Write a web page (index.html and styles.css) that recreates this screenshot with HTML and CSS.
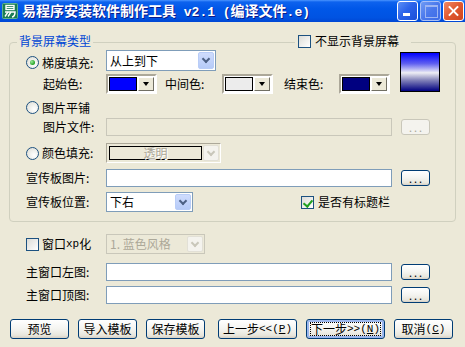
FILE: index.html
```html
<!DOCTYPE html>
<html lang="zh-CN">

<head>
    <meta charset="UTF-8">
    <title>易程序安装软件制作工具</title>
    <link rel="stylesheet" href="styles.css">
</head>

<body>
    <div class="window">
        <div class="titlebar">
            <svg class="app-icon" viewBox="0 0 16 16">
                <rect x="0.5" y="0.5" width="15" height="15" rx="1" fill="#1b7d55" stroke="#5fb38c"/>
                <rect x="4" y="2.5" width="8" height="4" fill="none" stroke="#fff" stroke-width="1.4"/>
                <line x1="4" y1="4.5" x2="12" y2="4.5" stroke="#fff" stroke-width="1"/>
                <path d="M3 9 H13 Q13 13.5 10 14" fill="none" stroke="#fff" stroke-width="1.5"/>
                <path d="M6 9 L3 13.5 M9 9 L6 13.5" fill="none" stroke="#fff" stroke-width="1.4"/>
            </svg>
            <span class="title">易程序安装软件制作工具<span class="mono"> v2.1 (</span>编译文件<span class="mono">.e)</span></span>
            <div class="caption">
                <span class="cbtn min"></span>
                <span class="cbtn max"></span>
                <span class="cbtn close"></span>
            </div>
        </div>

        <div class="client">
            <div class="group">
                <div class="group-head">
                    <span class="legend">背景屏幕类型</span>
                    <span class="head-check"><span class="check"></span>不显示背景屏幕</span>
                </div>

                <div class="grad-area">
                    <div class="grad-rows">
                        <div class="row r1">
                            <span class="lbl opt"><span class="radio on"></span>梯度填充:</span>
                            <div class="select sel-dir">从上到下<span class="drop"></span></div>
                        </div>
                        <div class="row r2">
                            <span class="lbl sub">起始色:</span>
                            <div class="picker"><span class="swatch sw-blue"></span><span class="pick-btn"></span></div>
                            <span class="lbl2 mid">中间色:</span>
                            <div class="picker"><span class="swatch sw-light"></span><span class="pick-btn"></span></div>
                            <span class="lbl2 end">结束色:</span>
                            <div class="picker"><span class="swatch sw-navy"></span><span class="pick-btn"></span></div>
                        </div>
                    </div>
                    <div class="preview"></div>
                </div>

                <div class="row r3">
                    <span class="lbl"><span class="radio"></span>图片平铺</span>
                </div>
                <div class="row r4">
                    <span class="lbl sub">图片文件:</span>
                    <div class="input disabled"></div>
                    <span class="btn dots disabled">...</span>
                </div>
                <div class="row r5">
                    <span class="lbl"><span class="radio"></span>颜色填充:</span>
                    <div class="color-combo">
                        <span class="cc-face">透明</span>
                        <span class="drop off"></span>
                    </div>
                </div>
                <div class="row r6">
                    <span class="lbl">宣传板图片:</span>
                    <div class="input"></div>
                    <span class="btn dots">...</span>
                </div>
                <div class="row r7">
                    <span class="lbl">宣传板位置:</span>
                    <div class="select sel-pos">下右<span class="drop"></span></div>
                    <span class="opt-check"><span class="check on"></span>是否有标题栏</span>
                </div>
            </div>

            <div class="row x1">
                <span class="lbl"><span class="check"></span>窗口<span class="mono-s">xp</span>化</span>
                <div class="select sel-style off">1. 蓝色风格<span class="drop off"></span></div>
            </div>
            <div class="row x2">
                <span class="lbl">主窗口左图:</span>
                <div class="input"></div>
                <span class="btn dots">...</span>
            </div>
            <div class="row x3">
                <span class="lbl">主窗口顶图:</span>
                <div class="input"></div>
                <span class="btn dots">...</span>
            </div>

            <div class="btnrow">
                <span class="btn small">预览</span>
                <span class="btn small">导入模板</span>
                <span class="btn small">保存模板</span>
                <span class="btn wide prev">上一步<span class="mono-s">&lt;&lt;(<u>P</u>)</span></span>
                <span class="btn wide focus"><span class="focus-ring">下一步<span class="mono-s">&gt;&gt;(<u>N</u>)</span></span></span>
                <span class="btn small">取消<span class="mono-s">(<u>C</u>)</span></span>
            </div>
        </div>
    </div>
</body>

</html>
```

FILE: styles.css
```css
* {
    box-sizing: border-box;
}

body {
    margin: 0;
    font-family: "Noto Sans CJK SC", "Liberation Sans", sans-serif;
    font-size: 12px;
    line-height: 14px;
    color: #000;
    background: #ECE9D8;
}

.window {
    width: 465px;
    height: 347px;
    background: #ECE9D8;
    overflow: hidden;
}

/* title bar */
.titlebar {
    height: 22px;
    display: flex;
    align-items: center;
    padding-left: 2px;
    background: linear-gradient(#4a94ff 0, #0d62ee 2px, #0057e8 40%, #0053e2 80%, #0047d4 100%);
}

.app-icon {
    width: 16px;
    height: 16px;
    flex: none;
}

.title {
    margin-left: 4px;
    color: #fff;
    font-weight: bold;
    font-size: 14px;
    line-height: 16px;
    white-space: nowrap;
    text-shadow: 1px 1px 0 #0a1a8a;
}

.mono {
    font-family: "Liberation Mono", monospace;
    font-size: 13px;
}

.mono-s {
    font-family: "Liberation Mono", monospace;
    font-size: 11px;
}

.caption {
    display: flex;
    gap: 2px;
    margin-left: auto;
    margin-right: 1px;
    align-self: flex-start;
    margin-top: 1px;
}

.cbtn {
    position: relative;
    width: 21px;
    height: 20px;
    border: 1px solid #fff;
    border-radius: 3px;
    background: linear-gradient(135deg, #5a8ef6, #2b63ea 45%, #1a4fd8);
}

.cbtn.min::after {
    content: "";
    position: absolute;
    left: 5px;
    bottom: 4px;
    width: 7px;
    height: 3px;
    background: #fff;
}

.cbtn.max {
    border-color: #aac0f6;
    background: linear-gradient(135deg, #6f9bf4, #4a78ec 50%, #3d6be6);
}

.cbtn.max::after {
    content: "";
    position: absolute;
    left: 4px;
    top: 3px;
    width: 11px;
    height: 10px;
    border: 1px solid #9db5f3;
    border-top-width: 2px;
}

.cbtn.close {
    background: linear-gradient(135deg, #f08a66, #e0582f 50%, #cf4320);
}

.cbtn.close::before,
.cbtn.close::after {
    content: "";
    position: absolute;
    left: 3px;
    top: 8px;
    width: 13px;
    height: 2px;
    background: #fff;
    transform: rotate(45deg);
}

.cbtn.close::after {
    transform: rotate(-45deg);
}

/* client area */
.client {
    padding: 20px 0 0 9px;
}

.group {
    width: 447px;
    border: 1px solid #D0D0BF;
    border-radius: 4px;
    padding: 0 0 9px 16px;
}

.group-head {
    display: flex;
    align-items: center;
    height: 14px;
    margin: -9px 0 0 -16px;
}

.legend {
    margin-left: 7px;
    padding: 0 2px;
    color: #0046D5;
    background: #ECE9D8;
}

.head-check {
    display: flex;
    align-items: center;
    margin-left: auto;
    margin-right: 44px;
    padding: 0 12px 0 3px;
    background: #ECE9D8;
}

.row {
    display: flex;
    align-items: center;
}

.lbl {
    width: 80px;
    flex: none;
    display: flex;
    align-items: center;
    white-space: nowrap;
}

.lbl.sub {
    padding-left: 17px;
}

.lbl.opt {
    margin-top: 4px;
}

.lbl2 {
    flex: none;
    white-space: nowrap;
}

.lbl2.mid {
    margin-left: 8px;
    width: 57px;
}

.lbl2.end {
    margin-left: 11px;
    width: 55px;
}

.grad-area {
    display: flex;
    align-items: flex-start;
}

.r1 {
    margin-top: 2px;
    height: 21px;
}

.r2 {
    margin-top: 3px;
    height: 20px;
}

.r3 {
    margin-top: 6px;
    height: 15px;
}

.r4 {
    margin-top: 3px;
    height: 18px;
}

.r5 {
    margin-top: 7px;
    height: 20px;
}

.r6 {
    margin-top: 6px;
    height: 18px;
}

.r7 {
    margin-top: 5px;
    height: 20px;
}

.x1 {
    margin: 12px 0 0 17px;
    height: 20px;
}

.x2 {
    margin: 9px 0 0 17px;
    height: 18px;
}

.x3 {
    margin: 5px 0 0 17px;
    height: 18px;
}

.preview {
    width: 40px;
    height: 40px;
    margin: 4px 0 0 10px;
    border: 1px solid #000;
    background: linear-gradient(#0000ff, #6060f0 28%, #eeeef4 52%, #8080b8 72%, #000080);
}

/* radio and check boxes */
.radio,
.check {
    position: relative;
    width: 13px;
    height: 13px;
    flex: none;
    margin-right: 3px;
    border: 1px solid #1C5180;
    background: linear-gradient(135deg, #dcdcd7, #fff);
}

.radio {
    border-radius: 50%;
    background: radial-gradient(circle at 65% 65%, #fff, #e6e6e0 70%, #d0d0ca);
}

.radio.on::after {
    content: "";
    position: absolute;
    left: 3px;
    top: 3px;
    width: 5px;
    height: 5px;
    border-radius: 50%;
    background: radial-gradient(circle at 35% 35%, #9ce89a, #21a121 70%);
}

.check.on::after {
    content: "";
    position: absolute;
    left: 3px;
    top: 1px;
    width: 4px;
    height: 7px;
    border-right: 2px solid #21A121;
    border-bottom: 2px solid #21A121;
    transform: rotate(40deg);
}

.opt-check {
    display: flex;
    align-items: center;
    margin-left: 108px;
}

.opt-check .check,
.head-check .check {
    margin-right: 4px;
}

/* combo boxes */
.select {
    display: flex;
    align-items: center;
    height: 100%;
    padding-left: 3px;
    border: 1px solid #7F9DB9;
    background: #fff;
    white-space: nowrap;
}

.sel-dir {
    width: 110px;
}

.sel-pos {
    width: 87px;
}

.sel-style {
    width: 99px;
}

.select.off {
    border-color: #C9C7BA;
    background: #ECE9D8;
    color: #ACA899;
}

.drop {
    position: relative;
    flex: none;
    align-self: stretch;
    width: 16px;
    margin: 1px 1px 1px auto;
    border-radius: 2px;
    border: 1px solid #b9cdf7;
    background: linear-gradient(#cfdcfd, #b6cbf8);
}

.drop::after {
    content: "";
    position: absolute;
    left: 4px;
    top: 3px;
    width: 4px;
    height: 4px;
    border-right: 2px solid #4d6185;
    border-bottom: 2px solid #4d6185;
    transform: rotate(45deg);
}

.drop.off {
    border-color: #e2e0d6;
    background: #f4f3ee;
}

.drop.off::after {
    border-color: #c9c7ba;
}

.color-combo {
    display: flex;
    width: 115px;
    height: 100%;
    border: 1px solid;
    border-color: #ACA899 #fff #fff #ACA899;
    background: #ECE9D8;
}

.cc-face {
    display: flex;
    align-items: center;
    justify-content: center;
    width: 93px;
    margin: 2px 0 2px 2px;
    border: 1px solid #000;
    color: #ACA899;
    text-shadow: 1px 1px 0 #fff;
}

/* colour pickers */
.picker {
    display: flex;
    align-items: center;
    flex: none;
    width: 51px;
    height: 100%;
    padding: 1px;
    border: 2px solid;
    border-color: #ACA899 #fff #fff #ACA899;
    background: #fff;
}

.swatch {
    width: 28px;
    height: 14px;
    border: 1px solid #000;
}

.sw-blue {
    background: #0000ff;
}

.sw-light {
    background: #ececec;
}

.sw-navy {
    background: #000080;
}

.pick-btn {
    position: relative;
    width: 16px;
    height: 14px;
    margin-left: 1px;
    border: 1px solid;
    border-color: #fff #716f64 #716f64 #fff;
    background: #ECE9D8;
}

.pick-btn::after {
    content: "";
    position: absolute;
    left: 4px;
    top: 4px;
    border: 3px solid transparent;
    border-top: 4px solid #000;
    border-bottom: 0;
}

/* edit boxes */
.input {
    width: 286px;
    height: 100%;
    border: 1px solid #7F9DB9;
    background: #fff;
}

.input.disabled {
    border-color: #C9C7BA;
    background: #ECE9D8;
}

/* buttons */
.btn {
    display: flex;
    align-items: center;
    justify-content: center;
    flex: none;
    height: 20px;
    border: 1px solid #003C74;
    border-radius: 3px;
    background: linear-gradient(#ffffff, #f4f4f0 50%, #e8e6dc 85%, #d6d0c5);
    white-space: nowrap;
}

.btn.dots {
    width: 29px;
    height: 16px;
    margin-left: 9px;
    letter-spacing: 2px;
    padding-left: 2px;
    font-size: 11px;
    line-height: 10px;
}

.btn.disabled {
    border-color: #C9C7BA;
    background: #f4f3ee;
    color: #ACA899;
}

.btnrow {
    display: flex;
    gap: 9px;
    margin: 15px 0 0 1px;
}

.btn.small {
    width: 59px;
}

.btn.wide {
    width: 79px;
}

.btn.prev {
    margin-left: 4px;
}

.btn.focus {
    box-shadow: inset 0 0 0 2px #9cb7ee;
}

.focus-ring {
    display: flex;
    align-items: center;
    justify-content: center;
    width: 71px;
    height: 14px;
    border: 1px dotted #000;
}
```
